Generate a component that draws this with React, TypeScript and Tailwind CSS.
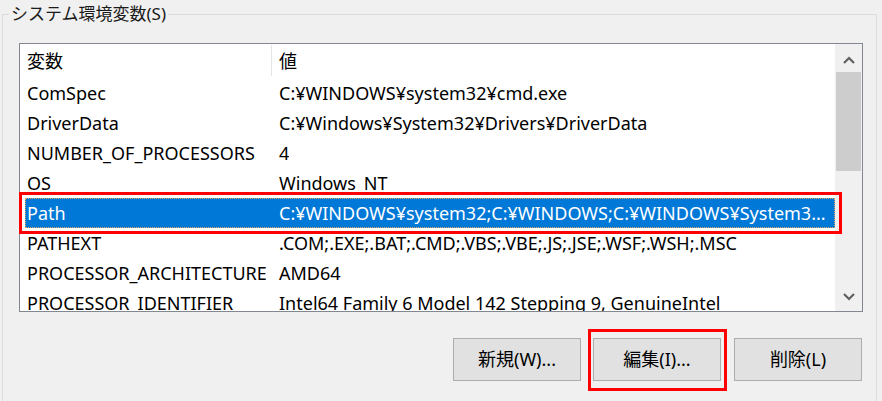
import React from "react";

type EnvRow = { name: string; value: string; selected?: boolean };

const rows: EnvRow[] = [
  { name: "ComSpec", value: "C:¥WINDOWS¥system32¥cmd.exe" },
  { name: "DriverData", value: "C:¥Windows¥System32¥Drivers¥DriverData" },
  { name: "NUMBER_OF_PROCESSORS", value: "4" },
  { name: "OS", value: "Windows_NT" },
  {
    name: "Path",
    value: "C:¥WINDOWS¥system32;C:¥WINDOWS;C:¥WINDOWS¥System3...",
    selected: true,
  },
  { name: "PATHEXT", value: ".COM;.EXE;.BAT;.CMD;.VBS;.VBE;.JS;.JSE;.WSF;.WSH;.MSC" },
  { name: "PROCESSOR_ARCHITECTURE", value: "AMD64" },
  { name: "PROCESSOR_IDENTIFIER", value: "Intel64 Family 6 Model 142 Stepping 9, GenuineIntel" },
];

function Chevron({ up }: { up?: boolean }) {
  return (
    <svg width="12" height="8" viewBox="0 0 12 8" className="block">
      <path
        d={up ? "M1 7 L6 2 L11 7" : "M1 1 L6 6 L11 1"}
        fill="none"
        stroke="#606060"
        strokeWidth="2.2"
      />
    </svg>
  );
}

function Button({ label, highlight }: { label: string; highlight?: boolean }) {
  return (
    <div className="relative">
      <button className="flex h-[43px] w-[128px] items-center justify-center border border-[#adadad] bg-[#e1e1e1] text-[18px] text-black">
        {label}
      </button>
      {highlight && (
        <div className="pointer-events-none absolute -bottom-[10px] -left-[5px] -right-[6px] -top-[9px] border-[3px] border-[#ff0000]" />
      )}
    </div>
  );
}

export default function App() {
  return (
    <div className="h-[401px] w-[882px] overflow-hidden bg-[#f0f0f0] font-['Noto_Sans','Noto_Sans_CJK_JP',sans-serif] text-black">
      <fieldset className="ml-[2px] h-[440px] w-[875px] border border-[#dcdcdc]">
        <legend className="ml-[6px] px-[2px] text-[17px] leading-[28px] text-[#1a1a1a]">
          システム環境変数(S)
        </legend>

        <div className="pl-[16px] pt-[15px]">
          <div className="relative h-[269px] w-[844px]">
            <div className="flex h-full w-full overflow-hidden border border-[#828790] bg-white">
              {/* list */}
              <div className="flex min-w-0 flex-1 flex-col overflow-hidden text-[18px]">
                <div className="ml-[5px] flex h-[34px] shrink-0 items-center">
                  <div className="w-[246px] pl-[2px]">変数</div>
                  <div className="mb-[2px] h-[31px] w-px self-end bg-[#e5e5e5]" />
                  <div className="pl-[7px]">値</div>
                </div>
                {rows.map((row) => (
                  <div
                    key={row.name}
                    className={
                      row.selected
                        ? "ml-[5px] flex h-[30px] shrink-0 items-center whitespace-nowrap bg-[#0078d7] text-white outline outline-1 -outline-offset-1 outline-dotted outline-[#e8a860]"
                        : "ml-[5px] flex h-[30px] shrink-0 items-center whitespace-nowrap"
                    }
                  >
                    <div className="w-[252px] shrink-0 pl-[2px]">{row.name}</div>
                    <div className="min-w-0 overflow-hidden pl-[2px]">{row.value}</div>
                  </div>
                ))}
              </div>

              {/* scrollbar */}
              <div className="flex w-[27px] shrink-0 flex-col bg-[#f0f0f0]">
                <div className="flex h-[28px] items-center justify-center pt-[3px]">
                  <Chevron up />
                </div>
                <div className="mx-[1px] h-[99px] bg-[#cdcdcd]" />
                <div className="flex-1" />
                <div className="flex h-[28px] items-center justify-center pb-[1px]">
                  <Chevron />
                </div>
              </div>
            </div>

            <div className="pointer-events-none absolute left-0 top-[149px] z-10 h-[42px] w-[823px] border-[3px] border-[#ff0000]" />
          </div>

          <div className="mt-[26px] flex w-[844px] justify-end">
            <Button label="新規(W)..." />
            <div className="ml-[12px]">
              <Button label="編集(I)..." highlight />
            </div>
            <div className="ml-[13px] mr-[1px]">
              <Button label="削除(L)" />
            </div>
          </div>
        </div>
      </fieldset>
    </div>
  );
}
